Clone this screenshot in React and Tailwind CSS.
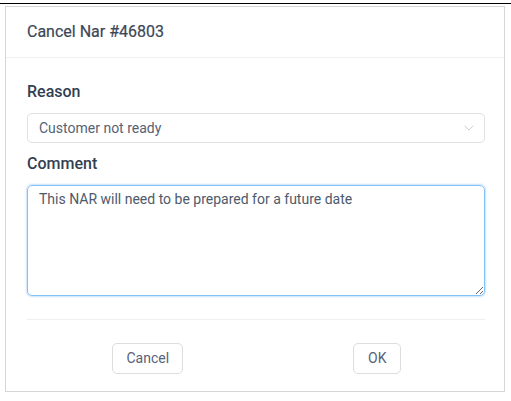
import { ChevronDown } from "lucide-react";

export default function App() {
  return (
    <div className="h-[401px] w-[511px] bg-white font-['Roboto',sans-serif]">
      <div className="h-[3px]" />
      <div className="h-px w-full bg-black" />
      <div className="ml-[5px] mt-[2px] h-[386px] w-[500px] border border-[#d6d6d6] bg-white">
        <div className="flex h-[51px] items-center border-b border-[#efefef] pl-[21px] text-[16px] text-[#3b4757] [-webkit-text-stroke:0.2px_#3b4757]">
          Cancel Nar #46803
        </div>

        <div className="px-[21px] pt-[24px]">
          <label className="block h-[20px] text-[16px] font-medium leading-[20px] text-[#334052]">
            Reason
          </label>
          <div className="mt-[11px] flex h-[30px] w-[458px] items-center justify-between rounded-[5px] border border-[#e1e1e1] pl-[11px] pr-[7px] text-[14px] text-[#566274]">
            <span>Customer not ready</span>
            <ChevronDown className="h-[16px] w-[16px] text-[#b8b8b8]" strokeWidth={1} />
          </div>

          <label className="mt-[11px] block h-[20px] text-[16px] font-medium leading-[20px] text-[#334052]">
            Comment
          </label>
          <textarea
            defaultValue="This NAR will need to be prepared for a future date"
            className="mt-[11px] block h-[111px] w-[458px] resize-y rounded-[5px] border border-[#84c1f7] px-[11px] py-[4px] text-[14px] leading-[18px] text-[#4d5a6b] shadow-[0_0_2px_1px_#c8e2fb] outline-none"
          />

          <div className="mt-[23px] h-px w-[458px] bg-[#efefef]" />
        </div>

        <div className="flex pl-[27px] pr-[12px] pt-[23px]">
          <div className="flex flex-1 justify-center">
            <button className="h-[31px] rounded-[5px] border border-[#dddddd] px-[13px] text-[14px] text-[#56627a]">
              Cancel
            </button>
          </div>
          <div className="flex flex-1 justify-center">
            <button className="h-[31px] rounded-[5px] border border-[#dddddd] px-[14px] text-[14px] text-[#56627a]">
              OK
            </button>
          </div>
        </div>
      </div>
    </div>
  );
}
